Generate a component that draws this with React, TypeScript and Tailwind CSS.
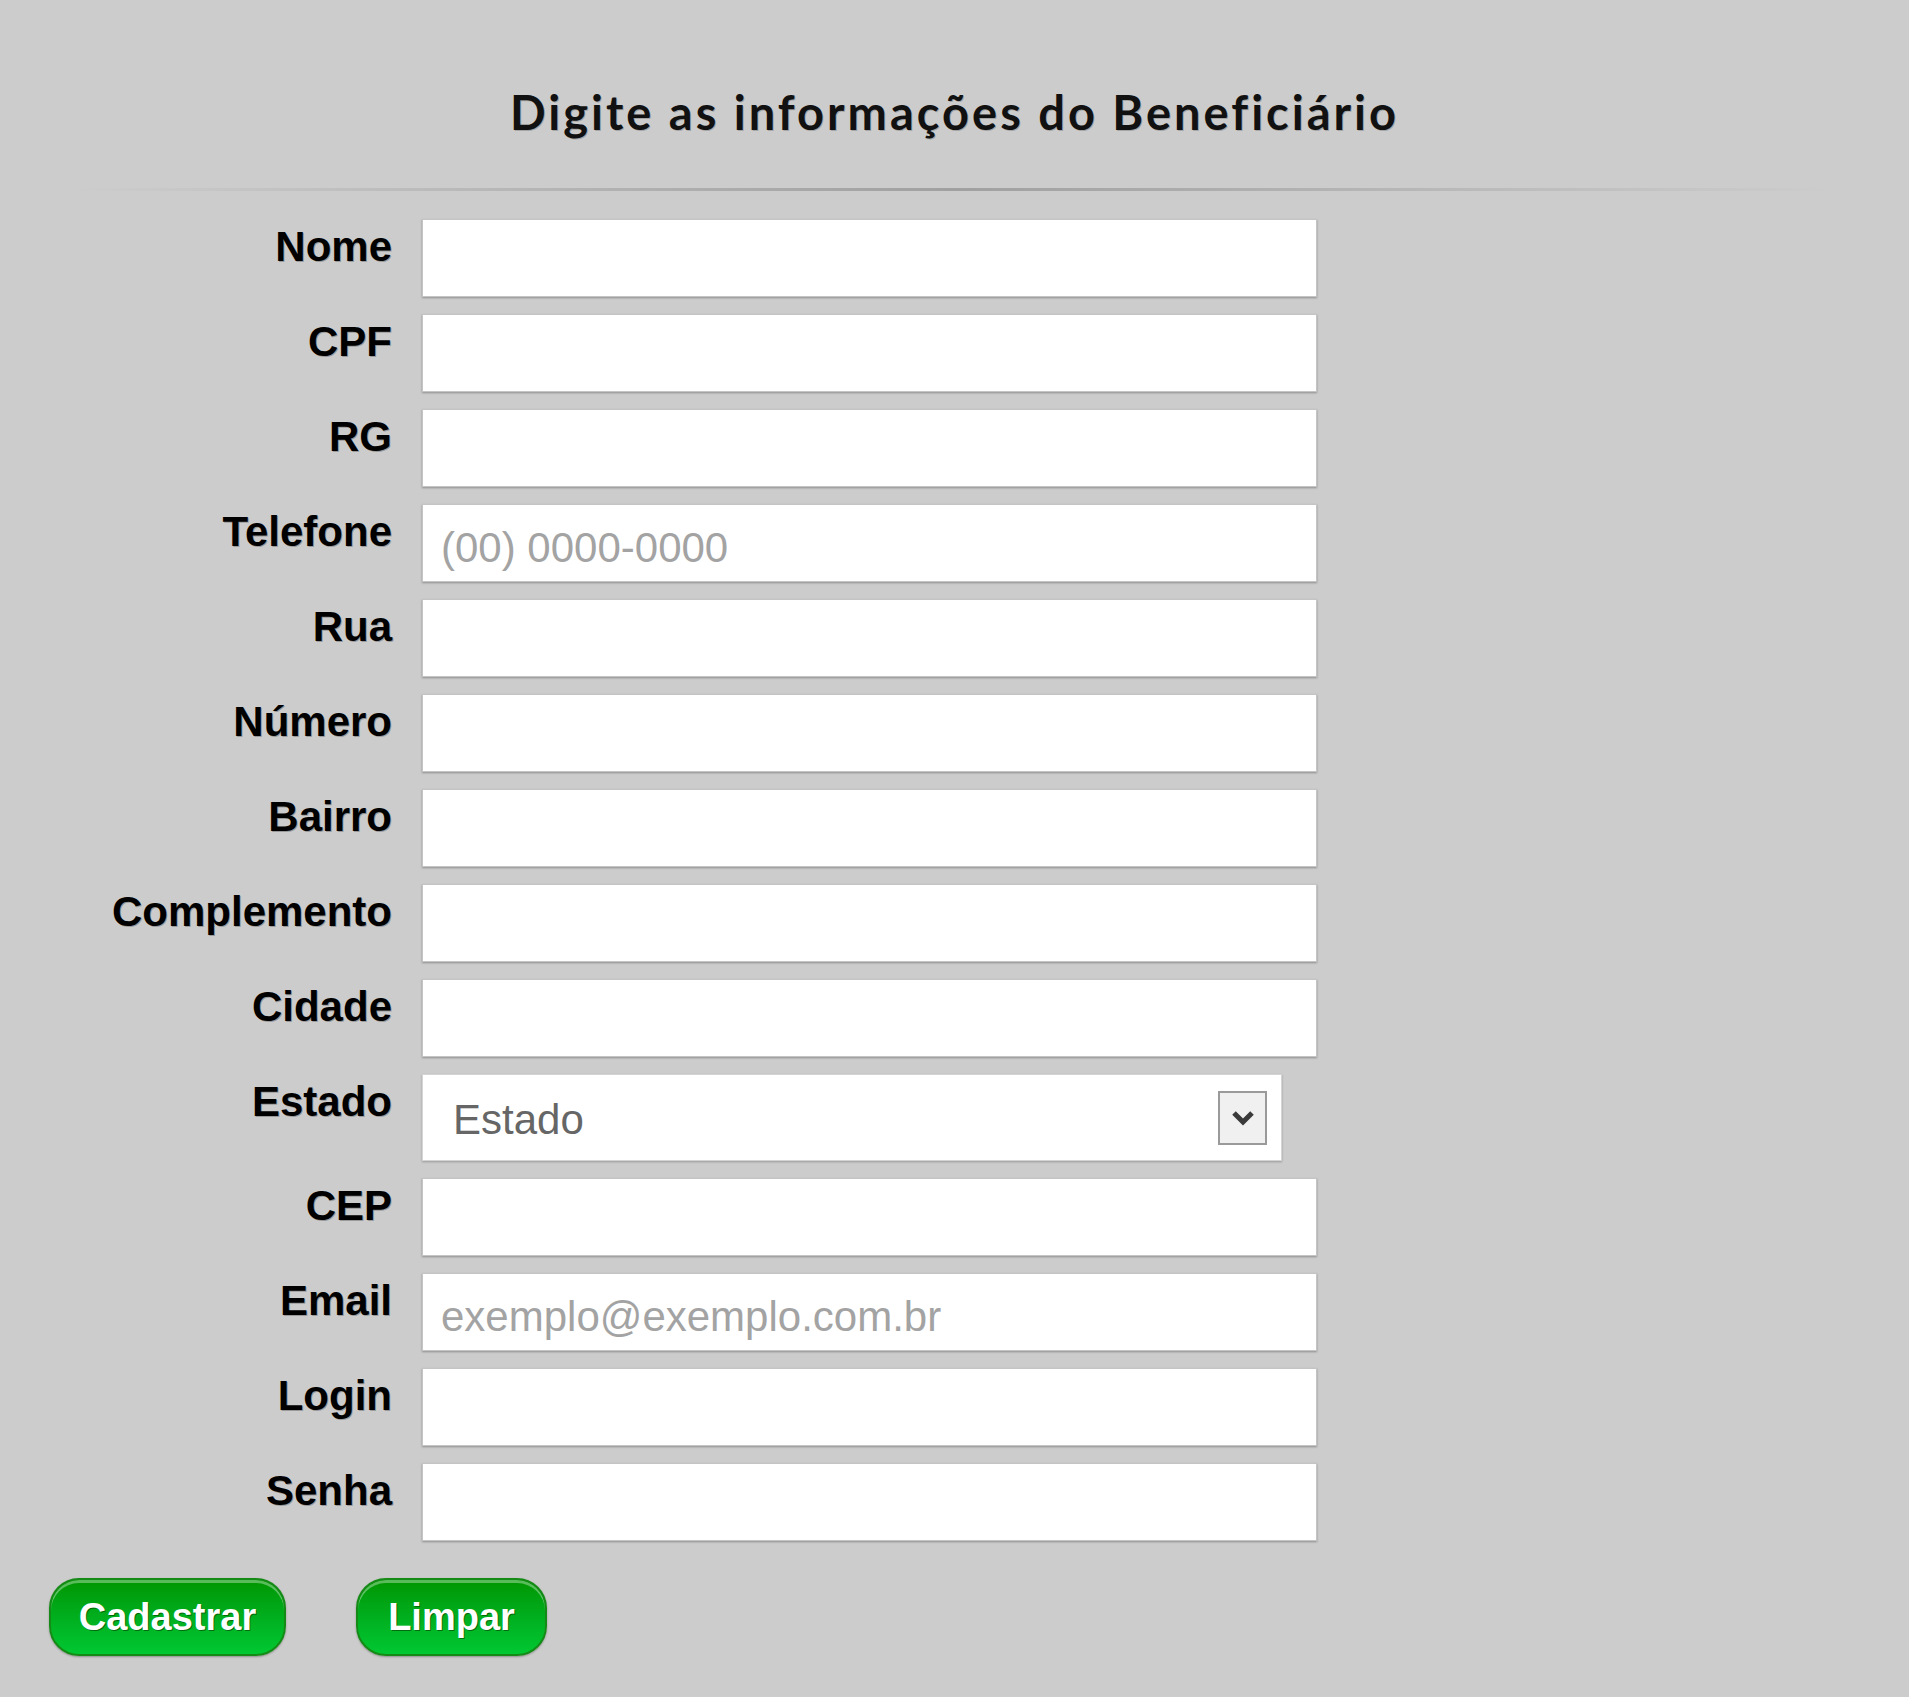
const fields: { label: string; placeholder?: string; type?: string }[] = [
  { label: "Nome" },
  { label: "CPF" },
  { label: "RG" },
  { label: "Telefone", placeholder: "(00) 0000-0000" },
  { label: "Rua" },
  { label: "Número" },
  { label: "Bairro" },
  { label: "Complemento" },
  { label: "Cidade" },
  { label: "Estado", type: "select" },
  { label: "CEP" },
  { label: "Email", placeholder: "exemplo@exemplo.com.br" },
  { label: "Login" },
  { label: "Senha", type: "password" },
];

function Row({ label, placeholder, type }: { label: string; placeholder?: string; type?: string }) {
  return (
    <div className="flex items-start gap-[30px]">
      <label className="w-[392px] text-right text-[42px] font-bold leading-[48px] text-black mt-[4px] font-['Liberation_Sans',Arial,sans-serif] [text-shadow:1px_1px_0_rgba(0,0,0,0.25)]">
        {label}
      </label>
      {type === "select" ? (
        <div className="relative w-[860px] h-[87px] bg-white border border-[#d4d4d4] shadow-[0_1px_2px_rgba(0,0,0,0.25)] flex items-center">
          <span className="pl-[30px] pt-[3px] text-[42px] text-[#666] font-['Liberation_Sans',Arial,sans-serif]">Estado</span>
          <div className="absolute right-[14px] top-[16px] w-[49px] h-[54px] bg-[#f0f0f0] border-2 border-[#9a9a9a] flex items-center justify-center">
            <svg width="22" height="16" viewBox="0 0 22 16">
              <path d="M2 3 L11 12 L20 3" fill="none" stroke="#3a3a3a" strokeWidth="5" strokeLinejoin="miter" />
            </svg>
          </div>
        </div>
      ) : (
        <input
          type={type === "password" ? "password" : "text"}
          placeholder={placeholder}
          className="w-[895px] h-[78px] bg-white border border-[#c4c4c4] shadow-[0_1px_2px_rgba(0,0,0,0.3)] px-[18px] pt-[10px] text-[42px] text-[#333] placeholder:text-[#a3a3a3] outline-none font-['Liberation_Sans',Arial,sans-serif]"
        />
      )}
    </div>
  );
}

function GreenButton({ children, width }: { children: string; width: string }) {
  return (
    <button
      className={`${width} h-[78px] rounded-[30px] border-2 border-[#168a16] bg-gradient-to-b from-[#009600] to-[#00c832] shadow-[inset_0_3px_0_rgba(255,255,255,0.35),0_1px_2px_rgba(0,0,0,0.3)] text-white text-[38px] font-bold font-['Liberation_Sans',Arial,sans-serif] [text-shadow:1px_1px_0_rgba(0,60,0,0.6)]`}
    >
      {children}
    </button>
  );
}

export default function App() {
  return (
    <div className="min-h-[1697px] bg-[#cccccc] flex flex-col">
      <h1 className="pt-[84px] text-center text-[47px] font-bold leading-[56px] tracking-[3px] text-[#111] font-['Lato',sans-serif] [text-shadow:1px_1px_0_rgba(0,0,0,0.2)]">
        Digite as informações do Beneficiário
      </h1>

      {/* separator fading at both ends */}
      <div className="mx-[75px] mt-[48px] h-[3px] bg-gradient-to-r from-transparent via-[#a0a0a0] to-transparent" />

      <form className="flex flex-col mt-[28px] gap-[17px]">
        {fields.map((f) => (
          <Row key={f.label} {...f} />
        ))}
      </form>

      <div className="flex gap-[70px] pl-[49px] mt-[37px]">
        <GreenButton width="w-[237px]">Cadastrar</GreenButton>
        <GreenButton width="w-[191px]">Limpar</GreenButton>
      </div>
    </div>
  );
}
